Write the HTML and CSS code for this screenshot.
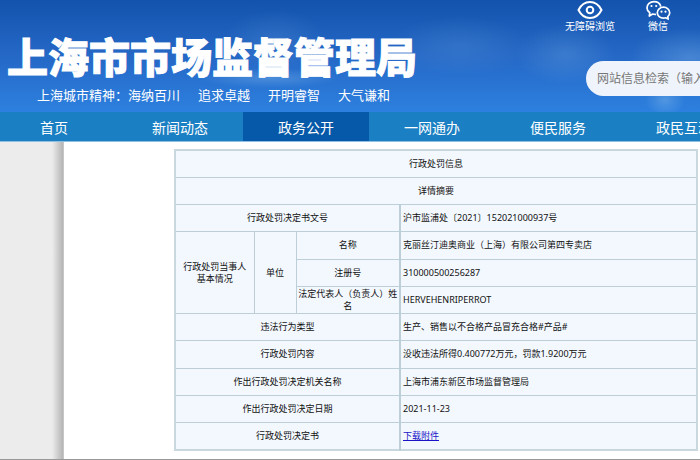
FILE: index.html
```html
<!DOCTYPE html>
<html lang="zh-CN">
<head>
    <meta charset="UTF-8">
    <meta name="viewport" content="width=device-width, initial-scale=1.0">
    <title>上海市市场监督管理局</title>
    <link rel="stylesheet" href="styles.css">
</head>
<body>
    <header class="header">
        <div class="brand">
            <h1>上海市市场监督管理局</h1>
            <p class="motto">
                <span>上海城市精神：海纳百川</span>
                <span>追求卓越</span>
                <span>开明睿智</span>
                <span>大气谦和</span>
            </p>
        </div>
        <div class="tools">
            <div class="tool-links">
                <a href="#">
                    <svg width="26" height="20" viewBox="0 0 26 20" fill="none" stroke="#fff" stroke-width="2">
                        <path d="M1.500 10C4 5 8 2 13 2s9 3 11.500 8C22 15 18 18 13 18S4 15 1.500 10z"/>
                        <circle cx="13" cy="10" r="3.300"/>
                    </svg>
                    无障碍浏览
                </a>
                <a href="#">
                    <svg width="26" height="20" viewBox="0 0 26 20" fill="none" stroke="#fff" stroke-width="1.700" stroke-linejoin="round">
                        <path d="M11 14.300c-1.200.2-2.300.1-3.300-.3L4.300 16l.5-3.200C3 11.500 2 10 2 8c0-3.800 3.100-6.300 6.900-6.300 3.500 0 6.300 2 6.900 5"/>
                        <path d="M18.500 7.200c-3.400 0-6.200 2.400-6.200 5.500s2.800 5.500 6.200 5.500c.8 0 1.500-.1 2.200-.4l2.500 1.300-.4-2.500c1.200-1 1.900-2.300 1.900-3.900 0-3.100-2.800-5.500-6.200-5.500z"/>
                        <g fill="#fff" stroke="none">
                            <circle cx="6.500" cy="6" r="1.100"/>
                            <circle cx="11.200" cy="6" r="1.100"/>
                            <circle cx="16.500" cy="11.700" r="1.100"/>
                            <circle cx="20.500" cy="11.700" r="1.100"/>
                        </g>
                    </svg>
                    微信
                </a>
            </div>
            <input type="search" class="search" aria-label="网站信息检索" placeholder="网站信息检索（输入关键字）">
        </div>
    </header>

    <nav class="nav">
        <a href="#">首页</a>
        <a href="#">新闻动态</a>
        <a href="#" class="active">政务公开</a>
        <a href="#">一网通办</a>
        <a href="#">便民服务</a>
        <a href="#">政民互动</a>
    </nav>

    <div class="page">
        <main class="content">
            <table class="detail">
                <colgroup>
                    <col class="col-party">
                    <col class="col-type">
                    <col class="col-field">
                    <col>
                </colgroup>
                <tr>
                    <th colspan="4">行政处罚信息</th>
                </tr>
                <tr>
                    <th colspan="4">详情摘要</th>
                </tr>
                <tr>
                    <th colspan="3">行政处罚决定书文号</th>
                    <td>沪市监浦处〔2021〕152021000937号</td>
                </tr>
                <tr>
                    <th rowspan="3">行政处罚当事人<br>基本情况</th>
                    <th rowspan="3">单位</th>
                    <th>名称</th>
                    <td>克丽丝汀迪奥商业（上海）有限公司第四专卖店</td>
                </tr>
                <tr>
                    <th>注册号</th>
                    <td>310000500256287</td>
                </tr>
                <tr>
                    <th>法定代表人（负责人）姓名</th>
                    <td>HERVEHENRIPERROT</td>
                </tr>
                <tr>
                    <th colspan="3">违法行为类型</th>
                    <td>生产、销售以不合格产品冒充合格#产品#</td>
                </tr>
                <tr>
                    <th colspan="3">行政处罚内容</th>
                    <td>没收违法所得0.400772万元，罚款1.9200万元</td>
                </tr>
                <tr>
                    <th colspan="3">作出行政处罚决定机关名称</th>
                    <td>上海市浦东新区市场监督管理局</td>
                </tr>
                <tr>
                    <th colspan="3">作出行政处罚决定日期</th>
                    <td>2021-11-23</td>
                </tr>
                <tr>
                    <th colspan="3">行政处罚决定书</th>
                    <td><a href="#">下载附件</a></td>
                </tr>
            </table>
        </main>
    </div>
</body>
</html>
```

FILE: styles.css
```css
* {
    box-sizing: border-box;
}
body {
    margin: 0;
    min-height: 100vh;
    display: flex;
    flex-direction: column;
    overflow-x: hidden;
    font-family: "Noto Sans", "Noto Sans CJK SC", sans-serif;
    background-color: #ececec;
}
.header {
    display: flex;
    justify-content: space-between;
    height: 112px;
    overflow: hidden;
    color: #fff;
    /* sky with a few faint clouds */
    background:
        radial-gradient(ellipse 50px 30px at 565px 54px, rgba(150, 200, 240, 0.2), transparent),
        radial-gradient(ellipse 60px 30px at 690px 58px, rgba(150, 200, 240, 0.3), transparent),
        radial-gradient(ellipse 70px 30px at 460px 46px, rgba(150, 200, 240, 0.14), transparent),
        radial-gradient(ellipse 50px 30px at 275px 40px, rgba(150, 200, 240, 0.14), transparent),
        radial-gradient(ellipse 70px 10px at 270px 78px, rgba(150, 200, 240, 0.3), transparent),
        radial-gradient(ellipse 20px 16px at 665px 100px, rgba(150, 200, 240, 0.35), transparent),
        linear-gradient(#1353ad, #2568c6 50%, #2d80df);
}
.brand {
    padding: 32px 0 0 7px;
    white-space: nowrap;
}
h1 {
    margin: 0;
    font-size: 41px;
    line-height: 50px;
    font-weight: 900;
    -webkit-text-stroke: 1px #fff;
}
.motto {
    display: flex;
    gap: 18px;
    margin: 3px 0 0 30px;
    font-size: 13px;
    line-height: 20px;
}
.tools {
    flex: none;
    width: 134px;
}
.tool-links {
    display: flex;
    gap: 20px;
    height: 61px;
}
.tool-links a {
    display: flex;
    flex-direction: column;
    align-items: center;
    width: 48px;
    color: #fff;
    font-size: 10px;
    line-height: 12px;
    text-decoration: none;
    white-space: nowrap;
}
.search {
    width: 240px;
    height: 35px;
    margin-left: 20px;
    padding: 0 11px;
    border: none;
    border-radius: 18px;
    background-color: #eff4fc;
    font-family: inherit;
    font-size: 12px;
}
.search::placeholder {
    color: #777;
}
.nav {
    display: flex;
    height: 30px;
    overflow: hidden;
    background-color: #1b7fc3;
    border-bottom: 1px solid #8fbfe2;
}
.nav a {
    flex: none;
    width: 126px;
    color: #fff;
    font-size: 14px;
    line-height: 32px;
    text-align: center;
    text-decoration: none;
}
.nav a:first-child {
    margin-left: -9px;
}
.nav .active {
    background-color: #0659a9;
}
.page {
    flex: 1;
    padding-left: 64px;
    background: linear-gradient(to right, #ececec 52px, #b4b4b4 63px, #d8d8d8 64px);
    border-bottom: 1px solid #999;
}
.content {
    height: 100%;
    padding: 7px 2px 8px 110px;
    background-color: #fff;
}
.detail {
    width: 100%;
    height: 302px;
    table-layout: fixed;
    border-collapse: collapse;
    border: 2px solid #c8d8de;
    background-color: #f3f8fe;
    color: #111;
    font-size: 9px;
    line-height: 12px;
}
.detail tr {
    height: 27px;
}
.detail th,
.detail td {
    padding: 0 2px;
    border: 1px solid #bccfd8;
}
.detail th {
    padding: 0;
    font-weight: normal;
}
.detail th + td {
    border-left-width: 2px;
}
.detail td a {
    color: #1a14c8;
}
.col-party {
    width: 79px;
}
.col-type {
    width: 42px;
}
.col-field {
    width: 104px;
}
```
